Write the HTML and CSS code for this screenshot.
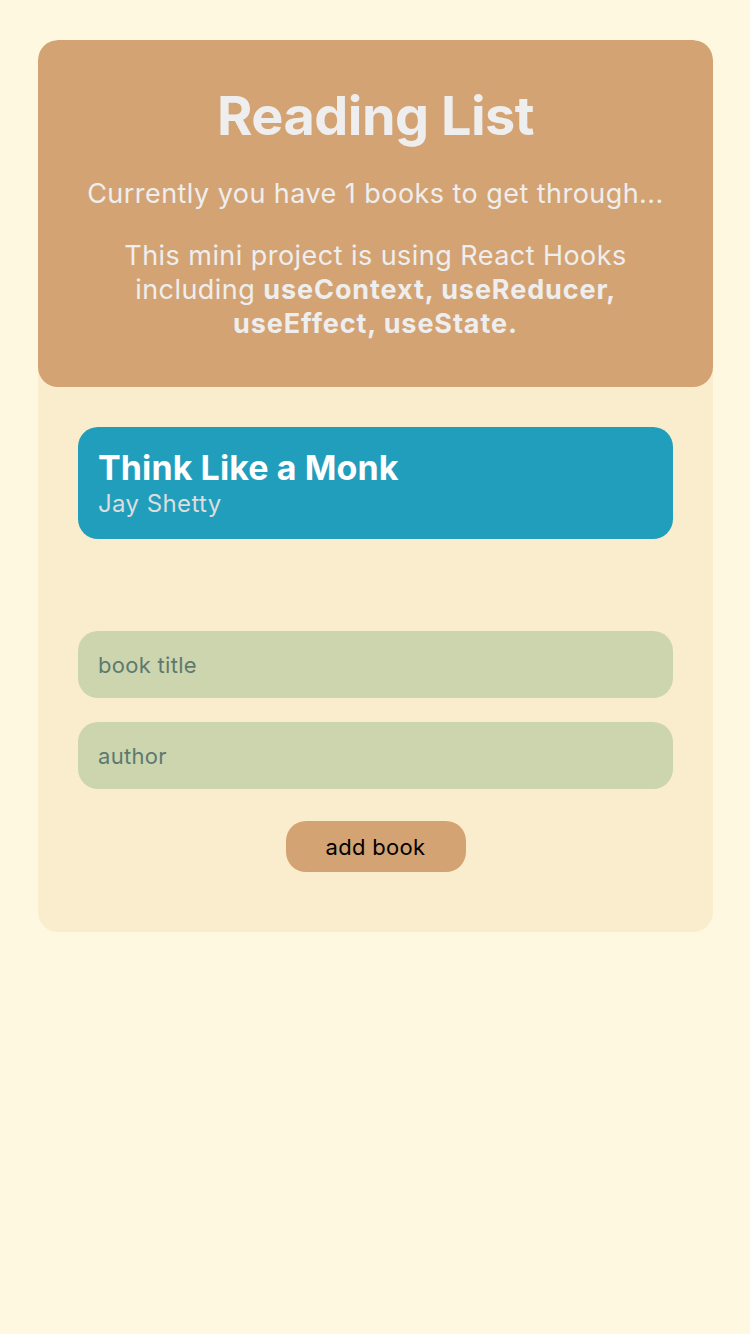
FILE: index.html
```html
<!DOCTYPE html>
<html>
<head>
<meta charset="utf-8">
<link rel="stylesheet" href="styles.css">
</head>
<body>
<div class="app">
  <header class="navbar">
    <h1>Reading List</h1>
    <p class="count">Currently you have 1 books to get through...</p>
    <p class="about"><span>This mini project is using React Hooks </span><span>including </span><strong>useContext, useReducer, </strong><strong>useEffect, useState.</strong></p>
  </header>
  <main class="content">
    <ul class="book-list">
      <li class="book">
        <div class="title">Think Like a Monk</div>
        <div class="author">Jay Shetty</div>
      </li>
    </ul>
    <form class="book-form">
      <input type="text" placeholder="book title">
      <input type="text" placeholder="author">
      <button type="button" class="add">add book</button>
    </form>
  </main>
</div>
</body>
</html>
```
FILE: styles.css
```css
html, body {
  margin: 0;
  padding: 0;
  background: #fef8e1;
}
body {
  font-family: Inter, Roboto, "Noto Sans", sans-serif;
  padding: 40px 37px 40px 38px;
}
.app {
  background: #faedcd;
  border-radius: 20px;
  overflow: hidden;
}
.navbar {
  background: #d4a373;
  border-radius: 20px;
  padding: 44px 40px 46px;
  text-align: center;
  color: #eeeeee;
}
.navbar h1 {
  margin: 0;
  font-size: 54px;
  font-weight: 700;
  line-height: 64px;
  letter-spacing: -0.5px;
}
.navbar .count {
  margin: 29px 0 0;
  font-size: 27px;
  font-weight: 400;
  line-height: 34px;
  letter-spacing: 0.45px;
}
.navbar .about {
  margin: 28px 0 0;
  font-size: 27px;
  line-height: 34px;
  letter-spacing: 0.45px;
}
.navbar .about strong {
  font-weight: 700;
  letter-spacing: 0.9px;
}
.content {
  padding: 40px 40px 60px;
}
.book-list {
  list-style: none;
  margin: 0;
  padding: 0;
}
.book {
  background: #219ebc;
  border-radius: 20px;
  padding: 20px 20px 20px;
  height: 112px;
  box-sizing: border-box;
}
.book .title {
  color: #ffffff;
  font-size: 34px;
  font-weight: 700;
  line-height: 42px;
  letter-spacing: 0.1px;
}
.book .author {
  color: #dddddd;
  font-size: 24px;
  line-height: 30px;
  letter-spacing: 0.4px;
}
.book-form {
  margin-top: 92px;
  display: flex;
  flex-direction: column;
  align-items: center;
  gap: 24px;
}
.book-form input {
  width: 100%;
  box-sizing: border-box;
  height: 67px;
  border: none;
  border-radius: 20px;
  background: #ccd5ae;
  padding: 0 20px;
  font-family: Inter, Roboto, sans-serif;
  font-size: 22px;
  letter-spacing: 0.3px;
  color: #333;
  outline: none;
}
.book-form input::placeholder {
  color: #5e7a6e;
}
.book-form .add {
  margin-top: 8px;
  width: 180px;
  height: 51px;
  border: none;
  border-radius: 20px;
  background: #d4a373;
  color: #000;
  font-family: Inter, Roboto, sans-serif;
  font-size: 22px;
  letter-spacing: 0.3px;
}
```
